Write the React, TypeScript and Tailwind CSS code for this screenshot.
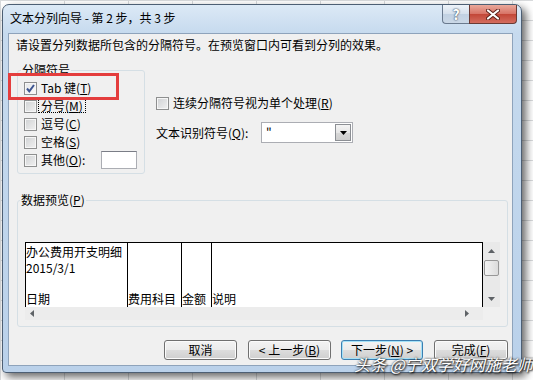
import type { ReactNode } from "react";

function Box({ checked }: { checked?: boolean }) {
  return (
    <span
      className={
        "flex h-[13px] w-[13px] shrink-0 items-center justify-center border border-[#8e8f8f] shadow-[inset_0_0_0_1px_#f6f6f6] " +
        (checked
          ? "bg-[linear-gradient(135deg,#e4e6e8,#fbfbfb)]"
          : "bg-[linear-gradient(135deg,#cfd1d3,#f1f1f1)]")
      }
    >
      {checked && (
        <svg width="11" height="11" viewBox="0 0 11 11">
          <path d="M2 5.5 L4.3 8.3 L9 2" fill="none" stroke="#3c5490" strokeWidth="2" />
        </svg>
      )}
    </span>
  );
}

function CheckRow({
  checked,
  focus,
  children,
}: {
  checked?: boolean;
  focus?: boolean;
  children: ReactNode;
}) {
  return (
    <div className="flex h-[18px] items-center">
      <Box checked={checked} />
      {focus ? (
        <span className="ml-[1px] border border-dotted border-black px-[2px] leading-[12px]">
          {children}
        </span>
      ) : (
        <span className="ml-[4px]">{children}</span>
      )}
    </div>
  );
}

function Arrow({ dir }: { dir: "up" | "down" | "left" | "right" }) {
  const d = {
    up: "M0 4 L3.5 0 L7 4 Z",
    down: "M0 0 L7 0 L3.5 4 Z",
    left: "M4 0 L4 7 L0 3.5 Z",
    right: "M0 0 L4 3.5 L0 7 Z",
  }[dir];
  const horiz = dir === "left" || dir === "right";
  return (
    <svg width={horiz ? 4 : 7} height={horiz ? 7 : 4} viewBox={horiz ? "0 0 4 7" : "0 0 7 4"}>
      <path d={d} fill="#5e6266" />
    </svg>
  );
}

function Btn({ w, primary, children }: { w: string; primary?: boolean; children: ReactNode }) {
  return (
    <div
      className={
        "flex h-[20px] items-center justify-center rounded-[3px] border bg-[linear-gradient(#f3f3f3,#ebebeb_50%,#dddddd_50%,#cfcfcf)] " +
        w +
        (primary
          ? " border-[#3c7fb1] shadow-[inset_0_0_0_1px_#a5e1f7]"
          : " border-[#707070] shadow-[inset_0_0_0_1px_#fbfbfb]")
      }
    >
      {children}
    </div>
  );
}

const col = "flex flex-col pt-[1px] whitespace-nowrap";

export default function App() {
  return (
    <div className="relative h-[380px] w-[533px] overflow-hidden bg-white bg-[linear-gradient(to_right,#d8dadc_1px,transparent_1px),linear-gradient(to_bottom,#d8dadc_1px,transparent_1px)] bg-[size:64px_20px] pl-[2px] pt-[4px] font-['Noto_Sans_CJK_SC','Noto_Sans',sans-serif] text-[12px] leading-[16px] text-black">
      {/* window */}
      <div className="flex h-[369px] w-[520px] flex-col rounded-t-[7px] rounded-b-[4px] border border-[#4d5f74] bg-[linear-gradient(to_bottom,#dce9f6,#c6daee_28px,#bad1ea)] shadow-[4px_4px_9px_rgba(0,0,0,0.6)]">
        {/* title bar */}
        <div className="flex h-[28px] shrink-0 items-start justify-between">
          <div className="pl-[7px] pt-[5px]">文本分列向导 - 第 2 步，共 3 步</div>
          <div className="mr-[4px] flex">
            <div className="flex h-[19px] w-[27px] items-center justify-center rounded-bl-[4px] border border-t-0 border-r-0 border-[#6a7a8e] bg-[linear-gradient(#eef3f9,#d5e0ec_50%,#c1d1e2_50%,#cbd8e7)] text-[14px] font-bold leading-none text-white [text-shadow:0_0_2px_#3b4a5e,0_0_1px_#3b4a5e]">
              ?
            </div>
            <div className="flex h-[19px] w-[48px] items-center justify-center rounded-br-[4px] border border-t-0 border-[#6a3a34] bg-[linear-gradient(#eaa99b,#d77265_50%,#c24536_50%,#d46d5f)]">
              <svg width="14" height="11" viewBox="0 0 14 11">
                <path d="M2 1.5 L12 9.5 M12 1.5 L2 9.5" stroke="#5a1f18" strokeWidth="4" strokeLinecap="round" />
                <path d="M2 1.5 L12 9.5 M12 1.5 L2 9.5" stroke="#ffffff" strokeWidth="2.2" strokeLinecap="round" />
              </svg>
            </div>
          </div>
        </div>

        {/* client area */}
        <div className="mx-[5px] flex h-[333px] w-[505px] shrink-0 flex-col border border-[#8ea3bb] bg-[#f0f0f0]">
          <p className="pl-[7px] pt-[3px]">请设置分列数据所包含的分隔符号。在预览窗口内可看到分列的效果。</p>

          <div className="mt-[9px] flex">
            <fieldset className="ml-[8px] h-[112px] w-[128px] rounded-[3px] border border-[#d5dfe5]">
              <legend className="ml-[3px] px-[1px]">分隔符号</legend>
              <div className="pl-[6px] pt-[1px]">
                <CheckRow checked>
                  Tab 键(<u>T</u>)
                </CheckRow>
                <CheckRow focus>
                  分号(<u>M</u>)
                </CheckRow>
                <CheckRow>
                  逗号(<u>C</u>)
                </CheckRow>
                <CheckRow>
                  空格(<u>S</u>)
                </CheckRow>
                <div className="flex h-[18px] items-center">
                  <Box />
                  <span className="ml-[4px] w-[60px]">
                    其他(<u>O</u>):
                  </span>
                  <span className="h-[18px] w-[36px] border border-[#abadb3] border-t-[#7a7d86] bg-white" />
                </div>
              </div>
            </fieldset>

            <div className="ml-[11px] flex flex-col pt-[32px]">
              <CheckRow>
                连续分隔符号视为单个处理(<u>R</u>)
              </CheckRow>
              <div className="mt-[10px] flex items-center">
                <span className="w-[105px]">
                  文本识别符号(<u>Q</u>):
                </span>
                <div className="flex h-[21px] w-[92px] border border-[#abadb3] bg-white">
                  <span className="flex-1 pl-[4px] pt-[1px]">"</span>
                  <span className="m-[1px] flex w-[16px] items-center justify-center border border-[#8c8f94] bg-[linear-gradient(#f4f4f4,#e6e6e6_50%,#d8d8d8_50%,#cdcdcd)]">
                    <svg width="7" height="4" viewBox="0 0 7 4">
                      <path d="M0 0 L7 0 L3.5 4 Z" fill="#000" />
                    </svg>
                  </span>
                </div>
              </div>
            </div>
          </div>

          <fieldset className="ml-[8px] mt-[18px] h-[135px] w-[491px] rounded-[3px] border border-[#d5dfe5]">
            <legend className="ml-[2px] px-[1px]">
              数据预览(<u>P</u>)
            </legend>
            <div className="ml-[7px] mt-[34px] grid h-[78px] w-[475px] grid-cols-[458px_17px] grid-rows-[65px_13px]">
              <div className="flex overflow-hidden border border-b-0 border-black bg-white">
                <div className={col + " w-[102px] border-r border-black"}>
                  <span>办公费用开支明细</span>
                  <span>2015/3/1</span>
                  <span className="h-[16px]" />
                  <span>日期</span>
                </div>
                <div className={col + " w-[54px] border-r border-black"}>
                  <span className="h-[48px]" />
                  <span>费用科目</span>
                </div>
                <div className={col + " w-[30px] border-r border-black"}>
                  <span className="h-[48px]" />
                  <span>金额</span>
                </div>
                <div className={col + " flex-1"}>
                  <span className="h-[48px]" />
                  <span>说明</span>
                </div>
              </div>
              <div className="flex flex-col items-center bg-[#e9e9e9]">
                <div className="flex h-[17px] items-center">
                  <Arrow dir="up" />
                </div>
                <div className="mt-[1px] h-[16px] w-[15px] rounded-[2px] border border-[#979797] bg-[linear-gradient(to_right,#f4f4f4,#dcdcdc)]" />
                <div className="flex-1" />
                <div className="flex h-[17px] items-center">
                  <Arrow dir="down" />
                </div>
              </div>
              <div className="flex items-center justify-between bg-[#ececec] pl-[5px] pr-[14px]">
                <Arrow dir="left" />
                <Arrow dir="right" />
              </div>
              <div className="bg-[#f0f0f0]" />
            </div>
          </fieldset>

          <div className="mt-[13px] flex justify-end pr-[4px]">
            <Btn w="w-[73px]">取消</Btn>
            <div className="ml-[11px]">
              <Btn w="w-[83px]">
                &lt; 上一步(<u>B</u>)
              </Btn>
            </div>
            <div className="ml-[10px]">
              <Btn w="w-[82px]" primary>
                下一步(<u>N</u>) &gt;
              </Btn>
            </div>
            <div className="ml-[11px]">
              <Btn w="w-[74px]">
                完成(<u>F</u>)
              </Btn>
            </div>
          </div>
        </div>
      </div>

      {/* annotation: red highlight */}
      <div className="absolute left-[8px] top-[73px] h-[27px] w-[111px] border-[3px] border-[#e43d3d]" />

      {/* watermark */}
      <div className="absolute left-[354px] top-[354px] whitespace-nowrap text-[16px] italic leading-[20px] text-white [text-shadow:0_0_2px_#222,1px_1px_2px_#000]">
        头条 @宁双学好网施老师
      </div>
    </div>
  );
}
